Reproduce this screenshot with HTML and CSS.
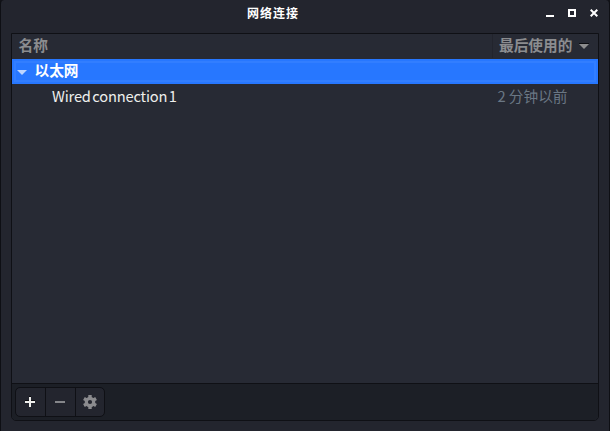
FILE: index.html
```html
<!DOCTYPE html>
<html lang="zh-CN">
<head>
<meta charset="utf-8">
<title>网络连接</title>
<link rel="stylesheet" href="styles.css">
</head>
<body>
<div class="window">
  <header class="titlebar">
    <h1 class="title">网络连接</h1>
    <div class="controls">
      <svg width="8" height="8" shape-rendering="crispEdges"><path d="M0 6h8v2H0z" fill="#fff"/></svg>
      <svg width="8" height="8" shape-rendering="crispEdges"><path d="M1 1h6v6H1z" fill="none" stroke="#fff" stroke-width="2"/></svg>
      <svg width="8" height="8"><path d="M.7 .7l6.6 6.6M7.3 .7L.7 7.3" stroke="#fff" stroke-width="2"/></svg>
    </div>
  </header>
  <main class="panel">
    <div class="columns">
      <div class="col name">名称</div>
      <div class="col used"><span>最后使用的</span><svg class="sort" width="10" height="6"><path d="M0 0h10v1H0z" fill="#0c0d11"/><path d="M0 1h10L5 6z" fill="#8d8d8e"/></svg></div>
    </div>
    <div class="row group">
      <svg width="10" height="5"><path d="M0 0h10L5 5z" fill="#bcd5ff"/></svg>
      <span>以太网</span>
    </div>
    <div class="row item">
      <span class="connection">Wired connection 1</span>
      <span class="time">2 分钟以前</span>
    </div>
    <footer class="toolbar">
      <div class="buttons">
        <button class="add" aria-label="+"><svg width="10" height="10" shape-rendering="crispEdges"><path d="M4 -1h2v1H4zM0 3h4v1H0zM6 3h4v1H6z" fill="#0b0c10"/><path d="M4 0h2v4h4v2H6v4H4V6H0V4h4z" fill="#eeeeec"/></svg></button>
        <button class="remove" aria-label="−"><svg width="10" height="10" shape-rendering="crispEdges"><path d="M0 4h10v2H0z" fill="#85868a"/></svg></button>
        <button class="settings" aria-label="⚙"><svg width="14" height="14" viewBox="-7 -7 14 14"><g fill="none" stroke="#8b8b8e"><circle r="3.7" stroke-width="3.2"/><path stroke-width="3.4" d="M0-7v3M0 4v3M-6.06-3.5l2.6 1.5M3.46 2l2.6 1.5M6.06-3.5L3.46-2M-3.46 2l-2.6 1.5"/></g></svg></button>
      </div>
    </footer>
  </main>
</div>
</body>
</html>
```
FILE: styles.css
```css
* { box-sizing: border-box; }
body {
  margin: 0;
  background: #121318;
  color: #eeeeec;
  font: 14.67px/24px "Noto Sans CJK SC", sans-serif;
}
.window {
  height: 431px;
  display: flex;
  flex-direction: column;
  padding: 0 10px 10px;
  background: #23252e;
  border: solid #0e0f14;
  border-width: 0 1px;
  border-radius: 4px 4px 0 0;
}
.titlebar {
  height: 33px;
  display: flex;
}
.title {
  flex: 1;
  margin: 0;
  padding-left: 236px;
  font-size: 12px;
  font-weight: 700;
  letter-spacing: 1px;
  line-height: 26px;
  color: #fff;
}
.controls {
  display: flex;
  gap: 14px;
  padding: 9px 1px 0 0;
}
.controls svg { display: block; }
.panel {
  flex: 1;
  display: flex;
  flex-direction: column;
  border: 1px solid #0f1015;
  border-radius: 0 0 5px 5px;
  background: #272a34;
  overflow: hidden;
}
.columns {
  height: 25px;
  display: flex;
  color: #8b8c8f;
  font-weight: 700;
  line-height: 22px;
}
.name { flex: 1; padding-left: 6.5px; }
.used {
  width: 106px;
  display: flex;
  gap: 7px;
  height: 24px;
  padding-left: 6px;
  border-left: 1px solid #22242d;
}
.sort { margin-top: 9px; }
.row { display: flex; }
.group {
  height: 25px;
  align-items: center;
  padding-left: 3px;
  gap: 7.5px;
  background: #2777ff;
  color: #fff;
  font-weight: 700;
  border: 2px solid #2777ff;
  box-shadow: inset 0 0 0 2px #327eff;
}
.group span { margin-top: -4px; }
.group svg { margin-top: 1px; }
.item { height: 26px; padding: 0 30.5px 0 40px; }
.connection { flex: 1; letter-spacing: -.18px; word-spacing: -1.5px; }
.time { color: #6a7784; }
.toolbar {
  height: 37px;
  margin-top: auto;
  padding: 3px;
  border-top: 1px solid #0f1015;
  background: #1c1f26;
}
.buttons {
  width: 90px;
  height: 30px;
  display: flex;
  border: 1px solid #0f1015;
  border-radius: 5px;
  background: #23252e;
  overflow: hidden;
}
button {
  flex: none;
  width: 30px;
  padding: 0;
  display: grid;
  place-items: center;
  background: none;
  border: 0;
  border-left: 1px solid #0f1015;
}
.add { width: 29px; border-left: 0; padding-right: 1px; }
.remove { padding-right: 1px; }
.settings { width: 29px; }
.add svg { overflow: visible; }
```
